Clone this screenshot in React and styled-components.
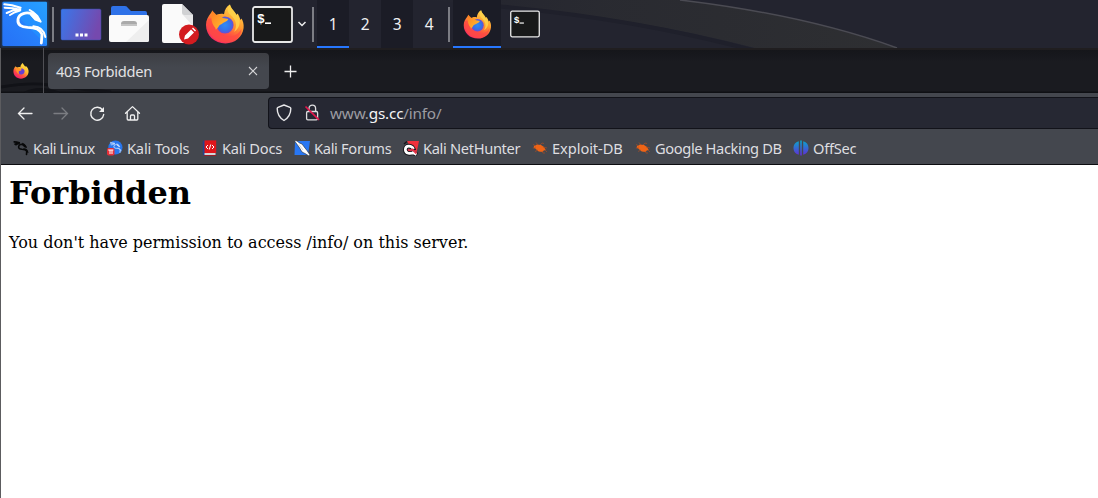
import React, { useId } from "react";
import styled, { createGlobalStyle } from "styled-components";

const GlobalStyle = createGlobalStyle`
  html, body { margin: 0; padding: 0; background: #fff; overflow: hidden; }
  * { box-sizing: border-box; }
  svg { display: block; flex: none; }
`;

const Desktop = styled.div`
  width: 1098px;
  height: 498px;
  display: flex;
  flex-direction: column;
  overflow: hidden;
  font-family: "Noto Sans", sans-serif;
`;
const Panel = styled.header`
  position: relative;
  height: 48px;
  flex: none;
  display: flex;
  background: #23242f;
`;
const Wallpaper = styled.svg`
  position: absolute;
  inset: 0;
`;
const PanelItems = styled.div`
  position: relative;
  display: flex;
  height: 48px;
`;
const Separator = styled.div`
  width: 2px;
  height: 35px;
  margin: 7px ${(p) => p.$after}px 0 ${(p) => p.$before}px;
  background: #7c7d84;
`;
const Slot = styled.div`
  width: ${(p) => p.$w}px;
  height: 48px;
  display: flex;
  align-items: center;
  justify-content: center;
`;
const Workspace = styled.div`
  width: 32px;
  height: 48px;
  display: flex;
  align-items: center;
  justify-content: center;
  color: #f0f0f2;
  font-size: 15.5px;
  letter-spacing: -0.5px;
  background: ${(p) => (p.$dark ? "#1b1c26" : "transparent")};
  box-shadow: ${(p) => (p.$active ? "inset 0 -2px #2777ff" : "none")};
`;
const Task = styled.div`
  width: 48px;
  height: 48px;
  display: flex;
  align-items: center;
  justify-content: center;
  background: ${(p) => (p.$active ? "#1b1c26" : "transparent")};
  box-shadow: ${(p) => (p.$active ? "inset 0 -2px #2777ff" : "none")};
`;

const Browser = styled.main`
  flex: 1;
  display: flex;
  flex-direction: column;
  border-left: 1px solid #5c5c5f;
  min-height: 0;
`;
const TabBar = styled.div`
  position: relative;
  height: 45px;
  flex: none;
  display: flex;
  background: linear-gradient(#201e20 0 2px, #15161a 2px, #1a1b20 14px, #1a1b20 43px, #0f1014 44px);
`;
const PinnedTab = styled.div`
  position: relative;
  width: 43px;
  padding: 15px 0 0 12px;
  border-right: 1px solid #505055;
`;
const Tab = styled.div`
  position: relative;
  width: 221px;
  height: 36px;
  margin: 5px 0 0 4px;
  padding: 0 11px 0 8px;
  display: flex;
  align-items: center;
  justify-content: space-between;
  border-radius: 4px;
  background: linear-gradient(#3d3e43, #44474e 14px);
  color: #e2e2e4;
  font-size: 14.67px;
  letter-spacing: -0.27px;
  white-space: nowrap;
`;
const NewTab = styled.div`
  padding: 17px 0 0 15px;
`;
const NavBar = styled.div`
  height: 40px;
  flex: none;
  display: flex;
  background: #44474e;
`;
const NavButtons = styled.div`
  width: 267px;
  display: flex;
  gap: 16px;
  padding: 10px 0 0 14px;
`;
const AddressBar = styled.div`
  flex: 1;
  height: 32px;
  margin-top: 4px;
  padding-left: 5px;
  display: flex;
  align-items: center;
  gap: 8px;
  border: 1px solid #12131a;
  border-right: 0;
  border-radius: 4px 0 0 4px;
  background: #262833;
`;
const Url = styled.span`
  color: #9c9ca2;
  font-size: 15.3px;
  letter-spacing: -0.2px;
  white-space: nowrap;
`;
const Domain = styled.span`
  color: #f5f5f7;
`;
const Bookmarks = styled.nav`
  height: 32px;
  flex: none;
  display: flex;
  padding-left: 12px;
  border-bottom: 1px solid #0c0d11;
  background: #44474e;
`;
const Bookmark = styled.div`
  width: ${(p) => p.$w}px;
  display: flex;
  align-items: center;
  gap: 4px;
  padding-bottom: 1px;
  color: #dedee0;
  font-size: 14.67px;
  letter-spacing: ${(p) => p.$tracking}px;
  white-space: nowrap;
`;
const Page = styled.article`
  flex: 1;
  padding: 9px 8px 8px;
  background: #fff;
  color: #000;
  font-family: "DejaVu Serif", serif;
`;
const Title = styled.h1`
  margin: 0;
  font-size: 32px;
  line-height: 38px;
  font-weight: 700;
`;
const Message = styled.p`
  margin: 21px 0 0;
  font-size: 16px;
  line-height: 20px;
`;

function Dragon({ color, weight = 1 }) {
  return (
    <g fill="none" stroke={color} strokeLinecap="round" strokeLinejoin="round">
      <path strokeWidth={6 * weight} d="M13 13 L36 16 L62 23 M14 23 L38 25 L61 29 M20 39 L39 31 L61 30 M30 45 L42 38 L60 32" />
      <path strokeWidth={8.5 * weight} d="M96 42 C80 35 57 40 54 58 C52 75 64 81 83 82 C105 82 121 88 126 103 L124 129" />
      <path strokeWidth={6 * weight} d="M100 79 C119 80 132 91 136 111 M89 30 L101 38 L112 48 L122 65 L106 59 L93 44" />
      <path fill={color} strokeWidth={2 * weight} d="M96 37 L108 43 L122 65 L105 58 L92 46Z" />
    </g>
  );
}

function Firefox({ size }) {
  const id = useId().replace(/:/g, "");
  return (
    <svg width={size} height={size} viewBox="0 0 40 40">
      <defs>
        <linearGradient id={id + "a"} x1=".8" y1=".05" x2=".3" y2="1">
          <stop stopColor="#ffd84d" />
          <stop offset=".4" stopColor="#ff9a2e" />
          <stop offset=".68" stopColor="#ff5240" />
          <stop offset="1" stopColor="#f5256c" />
        </linearGradient>
        <radialGradient id={id + "b"}>
          <stop stopColor="#2f8bf4" />
          <stop offset=".65" stopColor="#3472e8" />
          <stop offset="1" stopColor="#704ad0" />
        </radialGradient>
        <linearGradient id={id + "c"} x1="0" y1="0" x2="1" y2="1">
          <stop stopColor="#ff7b25" />
          <stop offset="1" stopColor="#ffc52e" />
        </linearGradient>
      </defs>
      <path fill={`url(#${id}a)`} d="M25 .4 C25.5 4 29.5 7 31.5 11 L32.5 9.5 C34 11.5 35 14 35.4 16 L36.5 14.5 C38 17 39 20 38.6 24 C37.6 33 30 39.4 20.5 39.4 C9.5 39.4 1 31.5 1 21 C1 16 3 12.5 6.3 8.5 L7.3 6.4 L9.6 12 C12.5 10 16 9.2 19 10.2 C19.5 5.5 21.8 2 25 .4Z" />
      <path fill="#ff4b43" opacity=".72" d="M3 15 C1 27 7 38 20 38.5 C30 39 36 32 36.5 25 C31 34 20 35 12 28 C7 24 9 20 8 14Z" />
      <circle cx="20" cy="21" r="8.6" fill={`url(#${id}b)`} />
      <path fill={`url(#${id}c)`} d="M7.2 6.4 L12 11.4 C14.2 10.8 16.3 11.7 17.8 14 L23.2 15 C22.5 17.7 18.4 18 17.3 19.7 C16 20.5 14.5 20.5 13.4 23 C11.5 25 10.5 27 10.5 24 C7 20.5 6 15 6.5 11Z" />
      <path fill="#ffd24a" opacity=".85" d="M25 .4 C22 3.5 22 7.5 25 10.5 C31 16 33 21 29 28 C36.5 23 35.6 15 32.2 10.2 L31.5 11 C30 6.7 25.5 4.5 25 .4Z" />
    </svg>
  );
}

function PinnedFirefox() {
  return (
    <svg width="16" height="16" viewBox="0 0 16 16">
      <defs>
        <linearGradient id="pin" x1=".85" y1="0" x2=".25" y2="1">
          <stop stopColor="#fff04b" /><stop offset=".45" stopColor="#ffb52e" /><stop offset=".7" stopColor="#ff5140" /><stop offset="1" stopColor="#ee1575" />
        </linearGradient>
      </defs>
      <path fill="url(#pin)" d="M9.8 0c.3 1.4 1.5 2.3 2.5 3.8l.6-.7c2 1.6 2.9 4 2.7 6-.4 3.8-3.5 6.6-7.6 6.6C3.6 15.700.4 12.500.4 8.300.4 6 1.400 4.500 2.500 3.200l1 1.600c1.200-.8 2.700-1 3.900-.6C7.500 2.300 8.500.8 9.800 0z" />
      <path fill="#6640d4" d="M8.400 5.200c2.200.3 3.400 1.600 3.200 3.400-.2 1.900-1.700 3-3.500 2.900-2-.1-3.300-1.400-3.300-3l3.400-.9z" />
      <path fill="#ff9427" d="M2.800 3.500 5 5.200l1.600.4 1.600 1c-.4.9-1.900.8-2.400 1.700-.4 1.200.4 1.700.2 2.700-2.100-.7-3.400-3.200-3.200-7.500z" />
    </svg>
  );
}

function TerminalIcon({ width, height }) {
  return (
    <svg width={width} height={height} viewBox="0 0 41 37">
      <rect x="1" y="1" width="39" height="35" rx="2" fill="#18191a" stroke="#e8e8e8" strokeWidth="1.8" />
      <text x="5" y="17" fill="#fff" fontFamily="Liberation Mono, monospace" fontWeight="700" fontSize="13">$</text>
      <path d="M13 17.2h6" stroke="#fff" strokeWidth="1.6" />
    </svg>
  );
}

function KaliIcon() {
  return (
    <svg width="50" height="48" viewBox="0 0 150 144">
      <defs>
        <linearGradient id="kali" x1="0" y1="1" x2="1" y2="0">
          <stop stopColor="#2671f6" /><stop offset=".5" stopColor="#2780fb" /><stop offset=".51" stopColor="#238dff" /><stop offset="1" stopColor="#27a0ff" />
        </linearGradient>
        <filter id="glow" x="-20%" y="-20%" width="140%" height="140%"><feGaussianBlur stdDeviation="3" /></filter>
      </defs>
      <rect x="3" y="3" width="143" height="139" rx="5" fill="#17539b" opacity=".5" filter="url(#glow)" />
      <rect x="7" y="5" width="134" height="133" rx="4" fill="url(#kali)" />
      <Dragon color="#fff" />
    </svg>
  );
}

function DesktopIcon() {
  return (
    <svg width="42" height="33" viewBox="0 0 42 33">
      <defs><linearGradient id="desk" x2="1" y2=".25"><stop stopColor="#3977ea" /><stop offset="1" stopColor="#7549ae" /></linearGradient></defs>
      <rect x="1" y="1" width="40" height="31" rx="1.5" fill="url(#desk)" stroke="#3150ad" strokeWidth=".5" />
      <path d="M15.5 25.500h3v3h-3zM20 25.500h3v3h-3zM24.500 25.500h3v3h-3z" fill="#fff" />
    </svg>
  );
}

function FolderIcon() {
  return (
    <svg width="42" height="38" viewBox="0 0 42 38">
      <path d="M3 3q0-2 2-2h12q2 0 3 2l3 3h14q2 0 2 2v6H3z" fill="#2f72e8" />
      <rect x="1" y="10" width="40" height="27" rx="2" fill="#fafafa" />
      <path d="M41 15v20q0 2-2 2H18z" fill="#eeeeee" />
      <path d="M13 21v-2q0-3 3-3h10q3 0 3 3v2z" fill="#aaa" />
      <path d="M13 19h16v2H13z" fill="#c5c5c5" />
    </svg>
  );
}

function EditorIcon() {
  return (
    <svg width="38" height="42" viewBox="0 0 38 42">
      <path d="M3 1h18l11 11v26q0 2-2 2H3q-2 0-2-2V3q0-2 2-2z" fill="#fafafa" />
      <path d="M21 1v9q0 2 2 2h9z" fill="#d0d1d3" />
      <path d="M22 12h10v11z" fill="#e7e7e8" />
      <circle cx="28" cy="31.500" r="10" fill="#d31c20" />
      <path d="m23 36.500 1-4 6-6 3 3-6 6zM31 25.500l1-1 3 3-1 1z" fill="#fff" />
    </svg>
  );
}

function BookmarkIcon({ kind }) {
  switch (kind) {
    case "linux":
      return <svg width="16" height="16" viewBox="4 2 142 138"><Dragon color="#08090a" weight={1.7} /></svg>;
    case "tools":
      return (
        <svg width="16" height="16" viewBox="0 0 16 16">
          <circle cx="8.4" cy="7.5" r="7.1" fill="#2876ee" />
          <g transform="translate(2.2 1.2) scale(.087)"><Dragon color="#cfe2ff" weight={1.2} /></g>
          <rect x="0" y="8" width="7.5" height="7.5" rx="1.8" fill="#e62f38" />
          <path d="M1.2 10h5.200M3 10v4M5 10v4" stroke="#fff" strokeWidth="1" />
        </svg>
      );
    case "docs":
      return (
        <svg width="16" height="16" viewBox="0 0 16 16">
          <path d="M.8 2q0-1.500 1.500-1.500H4v15H2.300Q.8 15.500.8 14z" fill="#24438c" />
          <path d="M2.500.4h11.700V13H2.500z" fill="#df161b" /><path d="M2.500 13h11v2h-11z" fill="#d4d4d7" /><path d="M2 15h12.200v.8H2z" fill="#a8151d" />
          <path d="M6 5 4 7l2 2M10 5l2 2-2 2M8.700 4.500 7.300 9.500" fill="none" stroke="#fff" strokeWidth="1" />
        </svg>
      );
    case "forums":
      return (
        <svg width="16" height="16" viewBox="0 0 16 16">
          <path d="M1 1h15l-2 14H.5z" fill="#2877f4" />
          <path d="m0 0 3 1 2.500 2 2.500 1 3 4 2 2.500 3 4.500-1 1-4-2.500-3-1.500-3-5L2 3z" fill="#fff" stroke="#202631" strokeWidth=".6" />
          <path d="m5 4.500 4 5.500" stroke="#98abc2" strokeWidth=".5" />
        </svg>
      );
    case "nethunter":
      return (
        <svg width="16" height="16" viewBox="0 0 16 16">
          <path d="M4 1h12l-2.500 12L7 7z" fill="#f0313c" />
          <path d="M11 10.500C9 4.500 2.500 5 2.300 9.500c0 4.500 5.500 4.500 7.700 3l4 2.500" fill="none" stroke="#15151a" strokeWidth="4.500" />
          <path d="M10.500 9C8.500 5 2.500 5 2.300 9.500c0 4.500 5.500 4.500 7.700 3l3.500 2" fill="none" stroke="#fff" strokeWidth="2.700" />
          <path d="M5 9.500q2 1.500 4.500 0l4 4" fill="none" stroke="#e4354a" strokeWidth="1.800" />
          <path d="m1 4 3-2.500" stroke="#15151a" strokeWidth="1.500" />
        </svg>
      );
    case "bug":
      return (
        <svg width="16" height="16" viewBox="0 0 16 16">
          <path d="M2 6 5 4.500l4 .5 3 2 1.700 3-2 .5-1 1.500-4-.5-3.500-3-1.500-.7z" fill="#ef6416" />
          <path d="M6 5 4 2.500M8 5l2-2 2 .5M4 6 1 4.500M4 8 .8 8M6 10l-3 1.500M10 11l1 2h2M11 7l4 1M13 10l2 2" fill="none" stroke="#a94d25" strokeWidth=".7" />
        </svg>
      );
    default:
      return (
        <svg width="16" height="16" viewBox="0 0 16 16">
          <defs><linearGradient id="offsec" x2="0" y2="1"><stop stopColor="#08a8ca" /><stop offset="1" stopColor="#622bd8" /></linearGradient></defs>
          <path fill="url(#offsec)" d="M5.800 1.200v13.500C2.200 14 .5 11 .5 8S2.200 2 5.800 1.200zM7.200.5h1.600v15H7.200zM10.200 1.200c3.600.8 5.300 3.800 5.300 6.800s-1.700 6-5.300 6.700z" />
        </svg>
      );
  }
}

const bookmarks = [
  ["linux", "Kali Linux", 94, -0.42],
  ["tools", "Kali Tools", 95, -0.2],
  ["docs", "Kali Docs", 92, -0.26],
  ["forums", "Kali Forums", 109, -0.32],
  ["nethunter", "Kali NetHunter", 129, -0.34],
  ["bug", "Exploit-DB", 103, -0.08],
  ["bug", "Google Hacking DB", 158, -0.38],
  ["offsec", "OffSec", 80, -0.25],
];

export default function App() {
  return (
    <Desktop>
      <GlobalStyle />
      <Panel>
        <Wallpaper width="1098" height="48">
          <defs>
            <linearGradient id="sweep"><stop stopColor="#2b2c31" stopOpacity="0" /><stop offset=".4" stopColor="#2b2c31" stopOpacity=".8" /><stop offset="1" stopColor="#2e2f32" /></linearGradient>
          </defs>
          <path d="M420 0H680Q806 15 895 48H755Q640 18 500 5L420 0Z" fill="url(#sweep)" />
          <path d="M495 6Q632 18 752 50" fill="none" stroke="#1f202b" strokeWidth="4" />
          <path d="M680 0Q806 15 897 48" fill="none" stroke="#4b4b53" strokeWidth="1.500" />
        </Wallpaper>
        <PanelItems>
          <Slot $w={50}><KaliIcon /></Slot>
          <Separator $before={2} $after={6} />
          <Slot $w={42}><DesktopIcon /></Slot>
          <Slot $w={54}><FolderIcon /></Slot>
          <Slot $w={48}><EditorIcon /></Slot>
          <Slot $w={42}><Firefox size={40} /></Slot>
          <Slot $w={52}><TerminalIcon width={41} height={37} /></Slot>
          <Slot $w={7}>
            <svg width="10" height="8" viewBox="0 0 10 8"><path d="m1.500 2 3.500 3.500L8.500 2" fill="none" stroke="#ededee" strokeWidth="1.500" /></svg>
          </Slot>
          <Separator $before={7} $after={3} />
          <Workspace $active $dark>1</Workspace>
          <Workspace>2</Workspace>
          <Workspace $dark>3</Workspace>
          <Workspace>4</Workspace>
          <Separator $before={3} $after={3} />
          <Task $active><Firefox size={29} /></Task>
          <Task><TerminalIcon width={30} height={28} /></Task>
        </PanelItems>
      </Panel>
      <Browser>
        <TabBar>
          <Wallpaper width="240" height="45">
            <path d="M0 39Q30 34 48 37T110 44M24 45Q38 38 58 45" fill="none" stroke="#111217" strokeWidth="3" />
          </Wallpaper>
          <PinnedTab><PinnedFirefox /></PinnedTab>
          <Tab>
            403 Forbidden
            <svg width="10" height="10" viewBox="0 0 10 10"><path d="m1 1 8 8M9 1 1 9" stroke="#d5d5d7" strokeWidth="1.100" /></svg>
          </Tab>
          <NewTab>
            <svg width="13" height="13" viewBox="0 0 13 13"><path d="M.5 6.500h12M6.500.5v12" stroke="#eee" strokeWidth="1.300" /></svg>
          </NewTab>
        </TabBar>
        <NavBar>
          <NavButtons>
            <svg width="20" height="20" viewBox="0 0 20 20" fill="none" stroke="#f0f0f0" strokeWidth="1.300" strokeLinecap="round"><path d="M17 10.500H3.500M9 5l-5.500 5.500L9 16" /></svg>
            <svg width="20" height="20" viewBox="0 0 20 20" fill="none" stroke="#7b7d82" strokeWidth="1.300" strokeLinecap="round"><path d="M3 10.500h13.500M11 5l5.500 5.500L11 16" /></svg>
            <svg width="20" height="20" viewBox="0 0 20 20" fill="none" stroke="#f0f0f0" strokeWidth="1.400"><path d="M15.600 7A6.500 6.500 0 1 0 16.700 11.500" strokeLinecap="round" /><path d="M17 4v5h-5z" fill="#f0f0f0" stroke="none" /></svg>
            <svg width="20" height="20" viewBox="0 0 20 20" fill="none" stroke="#f0f0f0" strokeWidth="1.300" strokeLinejoin="round" strokeLinecap="round"><path d="m2.500 10.200 7-6.600 7 6.600M4.200 9v7q0 1 1 1h8.600q1 0 1-1V9M7.500 17v-4q0-1 1-1h2q1 0 1 1v4" /></svg>
          </NavButtons>
          <AddressBar>
            <svg width="20" height="20" viewBox="0 0 20 20" fill="none" stroke="#e8e8ea" strokeWidth="1.400" strokeLinejoin="round"><path d="m10 2 6 2.300q.8.3.8 1.200c0 5-1.800 9-6.800 12C5 14.500 3.200 10.500 3.200 5.500q0-.9.8-1.200z" /></svg>
            <svg width="20" height="20" viewBox="0 0 20 20" fill="none" stroke="#dedee0" strokeWidth="1.300"><rect x="4.600" y="8.500" width="11" height="8.300" rx="1.300" /><path d="M7 8.500V5.500c0-4.600 6.600-4.600 6.600 0v3" /><path d="M3.500 3.500 17 16.800" stroke="#e4164c" strokeWidth="1.700" /></svg>
            <Url>www.<Domain>gs.cc</Domain>/info/</Url>
          </AddressBar>
        </NavBar>
        <Bookmarks>
          {bookmarks.map(([kind, label, width, tracking]) => (
            <Bookmark key={label} $w={width} $tracking={tracking}><BookmarkIcon kind={kind} />{label}</Bookmark>
          ))}
        </Bookmarks>
        <Page>
          <Title>Forbidden</Title>
          <Message>You don't have permission to access /info/ on this server.</Message>
        </Page>
      </Browser>
    </Desktop>
  );
}
